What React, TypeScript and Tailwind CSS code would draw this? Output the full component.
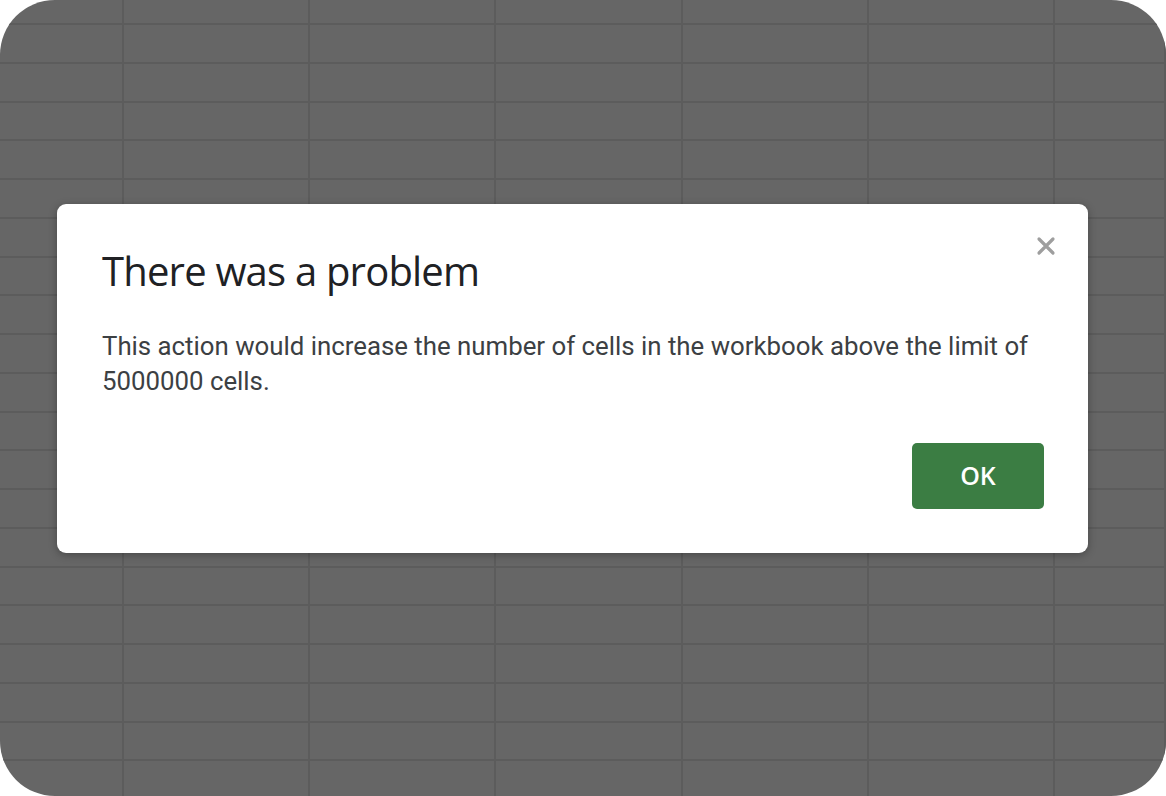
const COLS = [124, 186, 186, 187, 186, 186, 111];
const ROWS = 21;

const SheetGrid = () => {
  return (
    <div className="flex flex-col">
      <div className="flex h-[25px] border-b-2 border-[#5c5c5c]">
        {COLS.map((w, i) => (
          <div key={i} style={{ width: w }} className="shrink-0 border-r-2 border-[#5c5c5c]" />
        ))}
      </div>
      {Array.from({ length: ROWS }).map((_, r) => (
        <div key={r} className="flex h-[38.75px] border-b-2 border-[#5c5c5c]">
          {COLS.map((w, i) => (
            <div key={i} style={{ width: w }} className="shrink-0 border-r-2 border-[#5c5c5c]" />
          ))}
        </div>
      ))}
    </div>
  );
};

const ProblemDialog = () => {
  return (
    <div className="absolute left-[57px] top-[204px] flex h-[349px] w-[1031px] flex-col rounded-[9px] bg-white pl-[45px] pr-[40px] shadow-[0_2px_8px_rgba(0,0,0,0.3)]">
      <button className="absolute right-[32px] top-[32px] text-[#9e9e9e]">
        <svg width="20" height="20" viewBox="0 0 20 20">
          <path d="M3 3 L17 17 M17 3 L3 17" stroke="currentColor" strokeWidth="3.2" strokeLinecap="round" />
        </svg>
      </button>
      <h2 className="mt-[43px] font-['Open_Sans',sans-serif] text-[40px] leading-[48px] tracking-[-0.8px] text-[#202124]">
        There was a problem
      </h2>
      <p className="mt-[34px] font-['Roboto',sans-serif] text-[25.8px] leading-[35px] text-[#3c4043]">
        This action would increase the number of cells in the workbook above the limit of 5000000 cells.
      </p>
      <div className="mt-auto mb-[44px] flex justify-end pr-[4px]">
        <button className="flex h-[66px] w-[132px] items-center justify-center rounded-[5px] bg-[#3b7d43] font-['Open_Sans',sans-serif] text-[25px] font-semibold text-white">
          OK
        </button>
      </div>
    </div>
  );
};

export default function App() {
  return (
    <div className="h-[796px] w-[1166px] bg-white">
      <div className="relative h-full w-full overflow-hidden rounded-[55px] bg-[#666666]">
        <SheetGrid />
        <ProblemDialog />
      </div>
    </div>
  );
}
